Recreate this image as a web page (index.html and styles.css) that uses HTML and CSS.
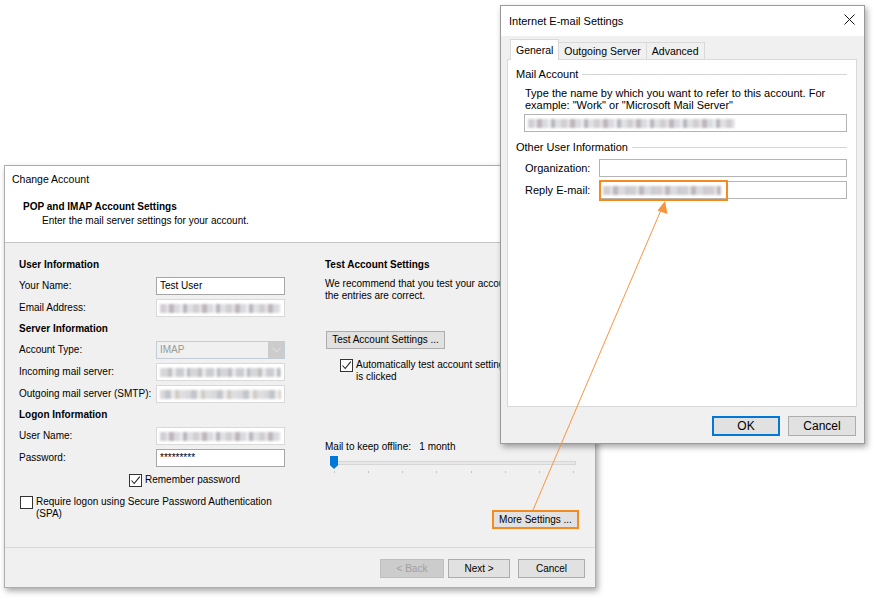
FILE: index.html
```html
<!DOCTYPE html>
<html lang="en">

<head>
  <meta charset="UTF-8">
  <title>Change Account</title>
  <link rel="stylesheet" href="styles.css">
</head>

<body>
  <!-- Change Account dialog -->
  <div class="win win-change">
    <div class="change-head">
      <div class="win-caption">Change Account</div>
      <div class="head-title">POP and IMAP Account Settings</div>
      <div class="head-sub">Enter the mail server settings for your account.</div>
    </div>

    <div class="change-body">
      <div class="col-left">
        <div class="sec">User Information</div>
        <div class="field">
          <span>Your Name:</span>
          <div class="input">Test User</div>
        </div>
        <div class="field">
          <span>Email Address:</span>
          <div class="input dim"><span class="blur"></span></div>
        </div>

        <div class="sec">Server Information</div>
        <div class="field">
          <span>Account Type:</span>
          <div class="combo">
            <span class="combo-text">IMAP</span>
            <span class="combo-btn">
              <svg width="9" height="6" viewBox="0 0 9 6"><path d="M0.5 0.8 L4.5 4.8 L8.5 0.8" fill="none" stroke="#e6e6e6" stroke-width="1"/></svg>
            </span>
          </div>
        </div>
        <div class="field">
          <span>Incoming mail server:</span>
          <div class="input dim"><span class="blur b2"></span></div>
        </div>
        <div class="field">
          <span>Outgoing mail server (SMTP):</span>
          <div class="input dim"><span class="blur b3"></span></div>
        </div>

        <div class="sec">Logon Information</div>
        <div class="field">
          <span>User Name:</span>
          <div class="input dim"><span class="blur"></span></div>
        </div>
        <div class="field">
          <span>Password:</span>
          <div class="input pass">*********</div>
        </div>
        <div class="field remember">
          <label class="check">
            <span class="box"><svg width="11" height="11" viewBox="0 0 11 11"><path d="M1.5 5.5 L4.2 8.5 L9.8 1.6" fill="none" stroke="#222" stroke-width="1.1"/></svg></span>
            <span>Remember password</span>
          </label>
        </div>
        <label class="check spa">
          <span class="box"></span>
          <span>Require logon using Secure Password Authentication<br>(SPA)</span>
        </label>
      </div>

      <div class="col-right">
        <div class="sec">Test Account Settings</div>
        <p class="note">We recommend that you test your account to ensure that<br>the entries are correct.</p>
        <div class="btn btn-test">Test Account Settings ...</div>
        <label class="check auto">
          <span class="box"><svg width="11" height="11" viewBox="0 0 11 11"><path d="M1.5 5.5 L4.2 8.5 L9.8 1.6" fill="none" stroke="#222" stroke-width="1.1"/></svg></span>
          <span>Automatically test account settings when Next<br>is clicked</span>
        </label>

        <div class="offline">Mail to keep offline:&nbsp;&nbsp; 1 month</div>
        <div class="slider">
          <div class="track"></div>
          <div class="thumb"></div>
          <div class="ticks">
            <i></i><i></i><i></i><i></i><i></i><i></i><i></i><i></i>
          </div>
        </div>

        <div class="more-row">
          <div class="btn btn-more">More Settings ...</div>
        </div>
      </div>
    </div>

    <div class="change-foot">
      <div class="btn btn-back">&lt; Back</div>
      <div class="btn btn-next">Next &gt;</div>
      <div class="btn btn-cancel">Cancel</div>
    </div>
  </div>

  <!-- Internet E-mail Settings dialog -->
  <div class="win win-mail">
    <div class="mail-title">
      <span>Internet E-mail Settings</span>
      <svg width="11" height="11" viewBox="0 0 11 11"><path d="M0.5 0.5 L10.5 10.5 M10.5 0.5 L0.5 10.5" stroke="#111" stroke-width="1"/></svg>
    </div>
    <div class="mail-body">
      <ul class="tabs">
        <li class="active">General</li>
        <li>Outgoing Server</li>
        <li>Advanced</li>
      </ul>
      <div class="panel">
        <div class="group">Mail Account</div>
        <p class="desc">Type the name by which you want to refer to this account. For<br>example: "Work" or "Microsoft Mail Server"</p>
        <div class="input wide"><span class="blur b4"></span></div>

        <div class="group group-other">Other User Information</div>
        <div class="mfield mfield-first">
          <span class="mlabel">Organization:</span>
          <div class="input minput"></div>
        </div>
        <div class="mfield">
          <span class="mlabel">Reply E-mail:</span>
          <div class="input minput reply"><span class="blur b5"></span><span class="hl"></span></div>
        </div>
      </div>
      <div class="mail-foot">
        <div class="btn btn-ok">OK</div>
        <div class="btn btn-mcancel">Cancel</div>
      </div>
    </div>
  </div>

  <!-- callout arrow -->
  <svg class="callout" width="878" height="602" viewBox="0 0 878 602">
    <line x1="533" y1="510" x2="661" y2="210" stroke="#f7953f" stroke-width="1"/>
    <path d="M665 201 L667.5 214 L657.5 210.5 Z" fill="#f7953f"/>
  </svg>
</body>

</html>
```

FILE: styles.css
```css
* {
  margin: 0;
  padding: 0;
  box-sizing: border-box;
}

li {
  list-style: none;
}

body {
  width: 878px;
  height: 602px;
  position: relative;
  overflow: hidden;
  background-color: #fff;
  font: 11px/14px "Liberation Sans", Arial, sans-serif;
  color: #000;
}

.win {
  position: absolute;
  background-color: #f0f0f0;
  border: 1px solid #aeaeae;
  box-shadow: 2px 3px 6px rgba(0, 0, 0, .35);
  display: flex;
  flex-direction: column;
}

/* ---------- Change Account ---------- */
.win-change {
  left: 4px;
  top: 165px;
  width: 592px;
  height: 423px;
  font-size: 10px;
  white-space: nowrap;
}

.change-head {
  height: 77px;
  background-color: #fff;
  border-bottom: 1px solid #c4c4c4;
  padding: 6px 0 0 7px;
}

.win-caption {
  font-size: 10.5px;
}

.head-title {
  margin: 14px 0 0 11px;
  font-weight: bold;
}

.head-sub {
  margin-left: 30px;
  line-height: 13px;
}

.change-body {
  height: 304px;
  display: flex;
  gap: 40px;
  padding: 12px 0 0 14px;
}

.col-left {
  width: 266px;
}

.col-right {
  width: 254px;
}

.sec {
  height: 20px;
  line-height: 20px;
  font-weight: bold;
}

.field {
  height: 22px;
  display: flex;
  align-items: center;
  justify-content: space-between;
}

.input {
  width: 129px;
  height: 18px;
  border: 1px solid #a6a6a6;
  background-color: #fff;
  padding: 0 3px;
  line-height: 16px;
  display: flex;
  align-items: center;
  overflow: hidden;
}

.input.dim {
  border-color: #d9d9d9;
}

.input.pass {
  font-size: 10px;
}

.blur {
  display: block;
  flex: none;
  width: 100%;
  height: 9px;
  background: repeating-linear-gradient(90deg, #c9c6cc 0 6px, #e2e0e0 6px 9px, #b3a9b2 9px 14px, #d4d5da 14px 20px, #ededed 20px 23px, #a9aab4 23px 27px, #dcdcdc 27px 33px);
  filter: blur(1.1px);
  opacity: .85;
}

.blur.b2 {
  background: repeating-linear-gradient(90deg, #cfd0d4 0 8px, #b6b3b6 8px 12px, #e6e6e6 12px 16px, #c2c4c9 16px 24px, #eeeeee 24px 27px, #aab0b4 27px 30px);
}

.blur.b3 {
  background: repeating-linear-gradient(90deg, #d3d3d6 0 5px, #b9bcc4 5px 11px, #e9e9e9 11px 15px, #c9c2b9 15px 19px, #d8d9dd 19px 26px);
}

.blur.b4 {
  width: 207px;
}

.blur.b5 {
  width: 118px;
  background: repeating-linear-gradient(90deg, #c9c6cc 0 7px, #e0dede 7px 10px, #b3abb3 10px 15px, #d4d5da 15px 22px, #c3c3ca 22px 26px);
}

.combo {
  width: 129px;
  height: 18px;
  border: 1px solid #c4cdd6;
  background-color: #f0f0f0;
  display: flex;
  align-items: center;
  justify-content: space-between;
}

.combo-text {
  padding-left: 3px;
  color: #9a9a9a;
}

.combo-btn {
  width: 16px;
  height: 16px;
  background-color: #cccccc;
  display: flex;
  align-items: center;
  justify-content: center;
}

.check {
  display: flex;
  align-items: flex-start;
  gap: 3px;
  line-height: 12px;
}

.box {
  width: 13px;
  height: 13px;
  flex: none;
  border: 1px solid #333;
  background-color: #fff;
  display: flex;
  align-items: center;
  justify-content: center;
}

.remember {
  justify-content: flex-start;
  padding-left: 110px;
}

.remember .check {
  align-items: center;
}

.spa {
  margin: 5px 0 0 1px;
}

.note {
  margin-top: 3px;
  line-height: 12px;
}

.btn {
  height: 18px;
  background-color: #e1e1e1;
  border: 1px solid #adadad;
  display: flex;
  align-items: center;
  justify-content: center;
  white-space: nowrap;
}

.btn-test {
  width: 119px;
  margin: 29px 0 0 1px;
}

.auto {
  margin: 10px 0 0 15px;
}

.offline {
  margin-top: 58px;
  line-height: 12px;
}

.slider {
  position: relative;
  width: 246px;
  height: 20px;
  margin: 2px 0 0 5px;
}

.track {
  position: absolute;
  left: 3px;
  right: 0;
  top: 6px;
  height: 4px;
  background-color: #e7e7e7;
  border: 1px solid #d6d6d6;
}

.thumb {
  position: absolute;
  left: 0;
  top: 1px;
  width: 8px;
  height: 13px;
  background-color: #0078d7;
  clip-path: polygon(0 0, 100% 0, 100% 72%, 50% 100%, 0 72%);
}

.ticks {
  position: absolute;
  left: 4px;
  right: 2px;
  top: 16px;
  display: flex;
  justify-content: space-between;
}

.ticks i {
  width: 1px;
  height: 2px;
  background-color: #c4c4c4;
}

.more-row {
  display: flex;
  justify-content: flex-end;
  margin-top: 35px;
}

.btn-more {
  width: 87px;
  height: 19px;
  border: 2px solid #f58a1f;
}

.change-foot {
  flex: 1;
  border-top: 1px solid #d7d7d7;
  display: flex;
  justify-content: flex-end;
  gap: 4px;
  padding: 11px 10px 0 0;
}

.change-foot .btn {
  height: 19px;
}

.btn-back {
  width: 64px;
  background-color: #cccccc;
  border-color: #bfbfbf;
  color: #a0a0a0;
}

.btn-next {
  width: 62px;
}

.btn-cancel {
  width: 67px;
  margin-left: 4px;
}

/* ---------- Internet E-mail Settings ---------- */
.win-mail {
  left: 500px;
  top: 5px;
  width: 365px;
  height: 439px;
  border-color: #9a9a9a;
}

.mail-title {
  height: 30px;
  background-color: #fff;
  display: flex;
  align-items: center;
  justify-content: space-between;
  padding: 0 9px 0 8px;
}

.mail-title svg {
  margin-top: -3px;
}

.mail-body {
  flex: 1;
  padding: 3px 6px 0;
}

.tabs {
  display: flex;
  align-items: flex-end;
  height: 21px;
  padding-left: 3px;
  position: relative;
  z-index: 1;
  margin-bottom: -1px;
  font-size: 10.5px;
}

.tabs li {
  height: 18px;
  line-height: 17px;
  padding: 0 5px;
  border: 1px solid #d9d9d9;
  border-left: none;
  background-color: #f0f0f0;
}

.tabs li.active {
  height: 21px;
  line-height: 20px;
  border-left: 1px solid #d9d9d9;
  border-bottom: none;
  background-color: #fff;
}

.panel {
  width: 350px;
  height: 348px;
  background-color: #fff;
  border: 1px solid #d9d9d9;
  padding: 7px 9px 0 8px;
}

.group {
  display: flex;
  align-items: center;
}

.group::after {
  content: "";
  flex: 1;
  border-top: 1px solid #d5d5d5;
  margin-left: 4px;
}

.desc {
  margin: 6px 0 0 9px;
  line-height: 12px;
}

.input.wide {
  width: 323px;
  margin: 3px 0 0 8px;
  border-color: #b4b4b4;
}

.group-other {
  margin-top: 8px;
}

.mfield {
  height: 22px;
  display: flex;
  align-items: center;
  padding-left: 9px;
}

.mfield-first {
  margin-top: 3px;
}

.mlabel {
  width: 74px;
}

.input.minput {
  width: 249px;
  border-color: #b4b4b4;
}

.reply {
  position: relative;
  overflow: visible;
}

.hl {
  position: absolute;
  left: -1px;
  top: -2px;
  width: 129px;
  height: 21px;
  border: 2px solid #f58a1f;
}

.mail-foot {
  display: flex;
  justify-content: flex-end;
  gap: 8px;
  padding: 9px 2px 0 0;
}

.mail-foot .btn {
  width: 68px;
  height: 20px;
  font-size: 12px;
}

.btn-ok {
  border-color: #0078d7;
  box-shadow: inset 0 0 0 1px #0078d7;
}

.callout {
  position: absolute;
  left: 0;
  top: 0;
  pointer-events: none;
}
```
